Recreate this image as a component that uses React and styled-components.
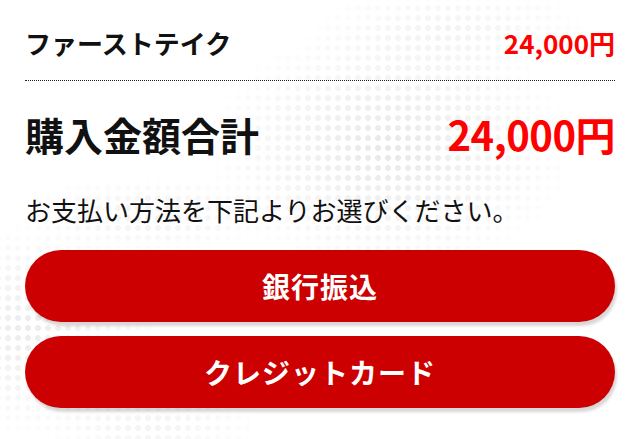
import React from "react";
import styled, { createGlobalStyle } from "styled-components";

const Global = createGlobalStyle`
  html, body { margin: 0; padding: 0; background: #fff; }
  body { font-family: "Noto Sans CJK JP", "Noto Sans", sans-serif; color: #111; }
`;

const Page = styled.div`
  position: relative;
  width: 640px;
  height: 439px;
  overflow: hidden;
  box-sizing: border-box;
  padding: 0 25px 0 25px;
  background: #fff;

  &::before {
    content: "";
    position: absolute;
    inset: 0;
    background-image: radial-gradient(circle, #e6e6e6 2.6px, transparent 3.2px);
    background-size: 10px 10px;
    background-position: 3px 3px;
    -webkit-mask-image:
      radial-gradient(ellipse 190px 130px at 390px 150px, rgba(0,0,0,0.95), transparent 100%),
      radial-gradient(ellipse 150px 50px at 450px 30px, rgba(0,0,0,0.5), transparent 100%),
      radial-gradient(ellipse 130px 110px at 30px 330px, rgba(0,0,0,0.8), transparent 100%),
      radial-gradient(ellipse 140px 40px at 150px 215px, rgba(0,0,0,0.6), transparent 100%),
      radial-gradient(ellipse 120px 40px at 150px 425px, rgba(0,0,0,0.5), transparent 100%);
    mask-image:
      radial-gradient(ellipse 190px 130px at 390px 150px, rgba(0,0,0,0.95), transparent 100%),
      radial-gradient(ellipse 150px 50px at 450px 30px, rgba(0,0,0,0.5), transparent 100%),
      radial-gradient(ellipse 130px 110px at 30px 330px, rgba(0,0,0,0.8), transparent 100%),
      radial-gradient(ellipse 140px 40px at 150px 215px, rgba(0,0,0,0.6), transparent 100%),
      radial-gradient(ellipse 120px 40px at 150px 425px, rgba(0,0,0,0.5), transparent 100%);
    pointer-events: none;
  }
`;

const Content = styled.div`
  position: relative;
  display: flex;
  flex-direction: column;
`;

const ItemRow = styled.div`
  display: flex;
  justify-content: space-between;
  align-items: center;
  height: 81px;
  padding-top: 5px;
  box-sizing: border-box;
  border-bottom: 1px dotted #222;
`;

const ItemName = styled.span`
  font-size: 26px;
  font-weight: 700;
  color: #111;
`;

const Price = styled.span`
  font-size: ${(p) => p.$size}px;
  font-weight: 700;
  color: #ff0000;
  letter-spacing: ${(p) => p.$spacing}px;
`;

const TotalRow = styled.div`
  display: flex;
  justify-content: space-between;
  align-items: center;
  height: 111px;
  padding-bottom: 5px;
  box-sizing: border-box;
`;

const TotalLabel = styled.span`
  font-size: 39px;
  font-weight: 700;
  color: #111;
`;

const Note = styled.p`
  margin: 0;
  font-size: 26px;
  line-height: 36px;
  color: #111;
  font-weight: 400;
`;

const Buttons = styled.div`
  display: flex;
  flex-direction: column;
  gap: 14px;
  margin-top: 22px;
`;

const PayButton = styled.button`
  display: flex;
  align-items: center;
  justify-content: center;
  width: 590px;
  height: 72px;
  border: none;
  border-radius: 36px;
  background: #cc0000;
  color: #fff;
  font-family: "Noto Sans CJK JP", "Noto Sans", sans-serif;
  font-size: 28px;
  font-weight: 700;
  letter-spacing: 1px;
  box-shadow: 2px 4px 3px rgba(0, 0, 0, 0.16);
  cursor: pointer;
  padding: 0;
`;

export default function App() {
  return (
    <>
      <Global />
      <Page>
        <Content>
          <ItemRow>
            <ItemName>ファーストテイク</ItemName>
            <Price $size={26} $spacing={0}>24,000円</Price>
          </ItemRow>
          <TotalRow>
            <TotalLabel>購入金額合計</TotalLabel>
            <Price $size={40} $spacing={-0.5}>24,000円</Price>
          </TotalRow>
          <Note>お支払い方法を下記よりお選びください。</Note>
          <Buttons>
            <PayButton>銀行振込</PayButton>
            <PayButton>クレジットカード</PayButton>
          </Buttons>
        </Content>
      </Page>
    </>
  );
}
